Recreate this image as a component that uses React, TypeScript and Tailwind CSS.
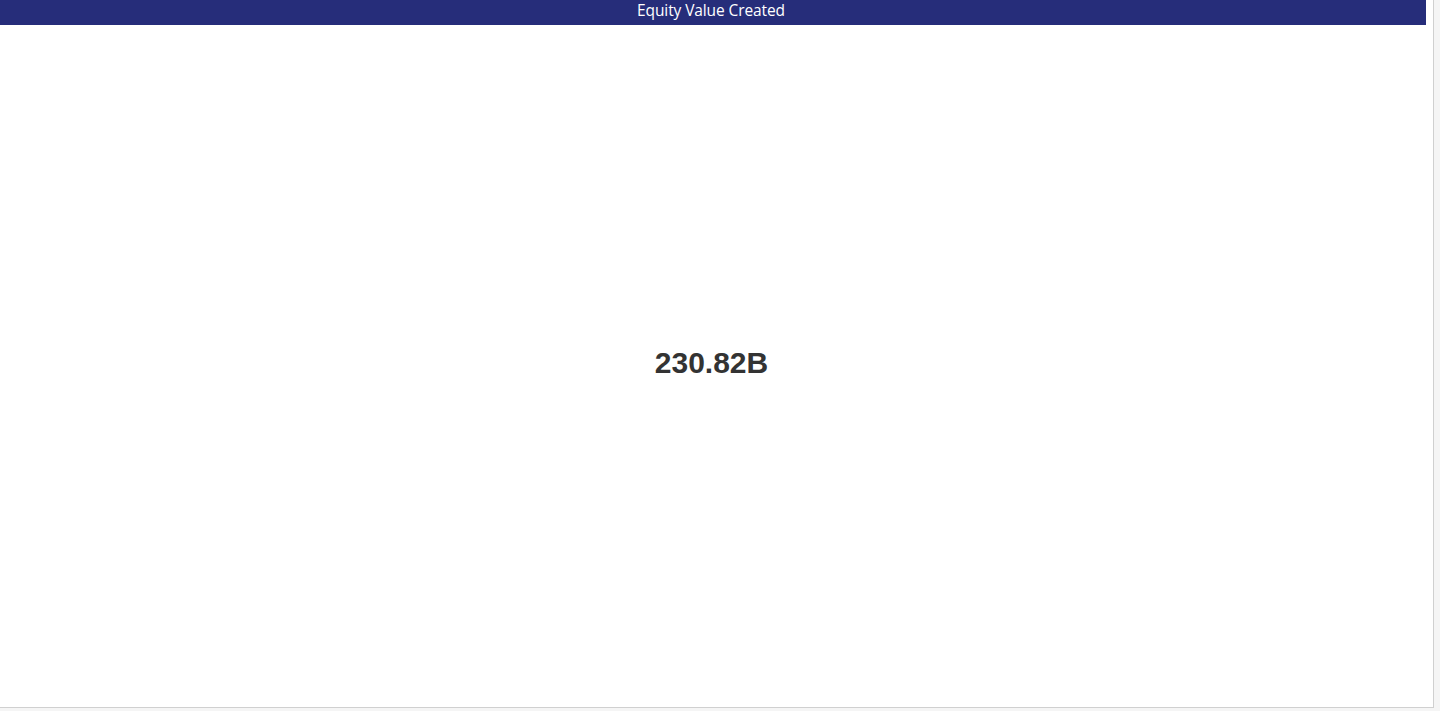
export default function App() {
  return (
    <div className="w-[1440px] h-[711px] bg-[#f5f5f5] overflow-hidden">
      <div className="w-[1434px] h-[708px] bg-white border-r border-b border-[#d0d0d0] flex flex-col">
        {/* title bar */}
        <div className="w-[1426px] h-[25px] bg-[#262d7a] flex items-start justify-center pr-[4px]">
          <span className="text-white text-[15.5px] leading-[21px] font-['Open_Sans','Noto_Sans',sans-serif] tracking-[-0.1px]">
            Equity Value Created
          </span>
        </div>
        {/* KPI value */}
        <div className="flex-1 flex items-center justify-center pr-[10px] pb-[7px]">
          <span className="text-[30px] font-bold text-[#333333] font-['Liberation_Sans',Arial,sans-serif]">
            230.82B
          </span>
        </div>
      </div>
    </div>
  );
}
